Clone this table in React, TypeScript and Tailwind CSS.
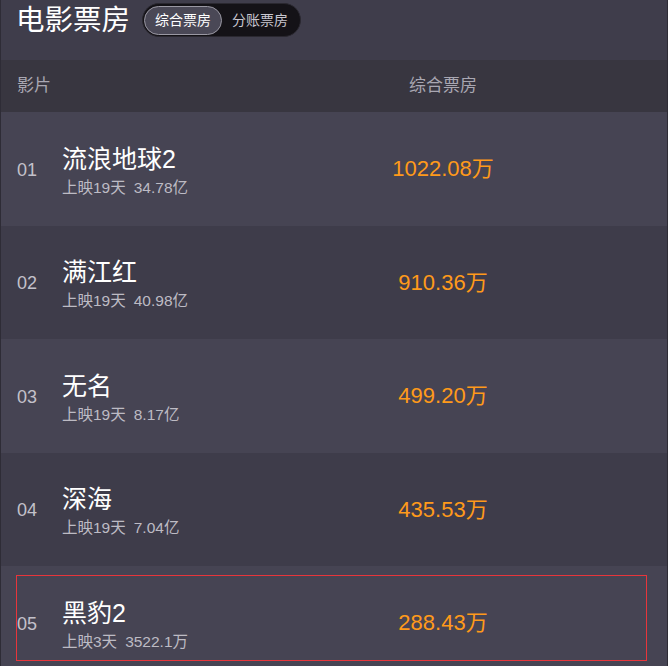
import React from "react";

const rows = [
  { no: "01", name: "流浪地球2", days: "上映19天", total: "34.78亿", box: "1022.08万" },
  { no: "02", name: "满江红", days: "上映19天", total: "40.98亿", box: "910.36万" },
  { no: "03", name: "无名", days: "上映19天", total: "8.17亿", box: "499.20万" },
  { no: "04", name: "深海", days: "上映19天", total: "7.04亿", box: "435.53万" },
  { no: "05", name: "黑豹2", days: "上映3天", total: "3522.1万", box: "288.43万" },
];

export default function App() {
  return (
    <div
      className="w-[668px] h-[666px] overflow-hidden bg-[#2e2c36] px-px"
      style={{ fontFamily: '"Liberation Sans", "Noto Sans CJK SC", sans-serif' }}
    >
      <div className="relative h-full bg-[#3f3d4b]">
        <div className="flex h-[60px] items-start pl-[15px] pt-[3px]">
          <div className="text-[28.5px] leading-[34px] text-white">电影票房</div>
          <div className="ml-[12px] flex h-[34px] items-center rounded-full border border-[#2a2830] bg-[#141217] px-px">
            <div className="flex h-[29px] items-center rounded-full border border-[#9a98a3] bg-[#4a4856] px-[10px] text-[14px] text-white">
              综合票房
            </div>
            <div className="pl-[10px] pr-[11px] text-[14px] text-[#c8c6cf]">分账票房</div>
          </div>
        </div>
        <div className="flex h-[52px] items-center bg-[#383640] text-[17px] text-[#a9a7b2]">
          <div className="w-[218px] pl-4">影片</div>
          <div className="flex-1 text-center">综合票房</div>
        </div>
        {rows.map((r, i) => (
          <div
            key={r.no}
            className={`flex h-[113.5px] items-center ${i % 2 === 0 ? "bg-[#464453]" : "bg-[#3e3c4a]"}`}
          >
            <div className="flex w-[218px] items-center">
              <div className="w-[61px] pl-4 pt-[3px] text-[18px] text-[#c3c1ca]">{r.no}</div>
              <div className="flex flex-col pt-[5px]">
                <div className="text-[25px] leading-[30px] text-white">{r.name}</div>
                <div className="mt-[3px] whitespace-nowrap text-[15.5px] leading-[22px] text-[#bdbbc4]">
                  {r.days}
                  <span className="ml-[8px]">{r.total}</span>
                </div>
              </div>
            </div>
            <div className="flex-1 text-center text-[22px] text-[#ff9a1a]">{r.box}</div>
          </div>
        ))}
        <div className="absolute left-[15px] top-[575px] h-[86px] w-[631px] border border-[#e8353b]" />
      </div>
    </div>
  );
}
